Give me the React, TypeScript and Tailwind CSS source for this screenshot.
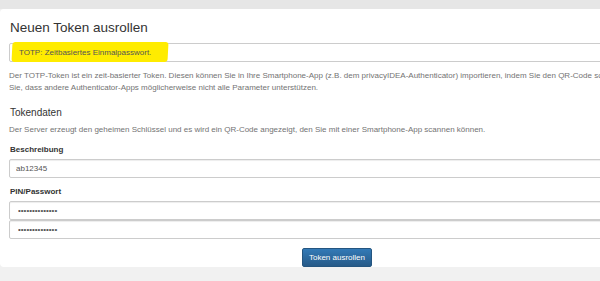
const BESCHREIBUNG_TOTP =
  "Der TOTP-Token ist ein zeit-basierter Token. Diesen können Sie in Ihre Smartphone-App (z.B. dem privacyIDEA-Authenticator) importieren, indem Sie den QR-Code scannen. Bitte beachten Sie, dass andere Authenticator-Apps möglicherweise nicht alle Parameter unterstützen.";

const PUNKTE = "••••••••••••••";

const feld =
  "block h-[19px] w-full rounded-[2px] border border-[#cccccc] bg-white px-[6px] text-[8px] text-[#555555] shadow-[inset_0_1px_1px_rgba(0,0,0,0.075)] outline-none";

export default function App() {
  return (
    <div className="h-[281px] w-[600px] overflow-hidden bg-[#f1f1f1] font-['Liberation_Sans',Arial,sans-serif] text-[#333333]">
      <div className="h-[9px] bg-[#e6e6e6]" />
      <Formular />
    </div>
  );
}

/* ————— Panel ————— */

function Formular() {
  return (
    <form className="w-[674px] rounded-[4px] bg-white pt-[11px] pr-[9px] pl-[9px]">
      <h3 className="pl-px text-[13.5px] leading-[16px] font-normal">
        Neuen Token ausrollen
      </h3>

      <div className="relative mt-[7px] flex h-[19px] items-center rounded-[2px] border border-[#cccccc] bg-white pl-[9px] text-[8px] text-[#555555]">
        {/* Markierung mit dem Textmarker */}
        <span
          aria-hidden="true"
          className="absolute top-[-2px] left-[2px] h-[20px] w-[156px] -skew-x-3 rounded-[3px] bg-[#ffec00]"
        />
        <span className="relative">TOTP: Zeitbasiertes Einmalpasswort.</span>
      </div>

      <p className="mt-[8px] w-[676px] text-[8px] leading-[12px] text-[#737373]">
        {BESCHREIBUNG_TOTP}
      </p>

      <h4 className="mt-[13px] pl-px text-[10px] leading-[12px] font-normal">
        Tokendaten
      </h4>
      <p className="mt-[5px] text-[8px] leading-[12px] text-[#737373]">
        Der Server erzeugt den geheimen Schlüssel und es wird ein QR-Code
        angezeigt, den Sie mit einer Smartphone-App scannen können.
      </p>

      <label className="mt-[8px] block pl-px text-[8px] leading-[12px] font-bold">
        Beschreibung
      </label>
      <input readOnly value="ab12345" className={`mt-[3px] ${feld}`} />

      <label className="mt-[8px] block pl-px text-[8px] leading-[12px] font-bold">
        PIN/Passwort
      </label>
      <input readOnly value={PUNKTE} className={`mt-[3px] pl-[8px] ${feld}`} />
      <input readOnly value={PUNKTE} className={`pl-[8px] ${feld}`} />

      <div className="mt-[9px] flex justify-center">
        <button
          type="button"
          className="h-[19px] w-[70px] rounded-[2px] border border-[#245580] bg-gradient-to-b from-[#337ab7] to-[#265a88] text-[8px] text-white"
        >
          Token ausrollen
        </button>
      </div>
    </form>
  );
}
